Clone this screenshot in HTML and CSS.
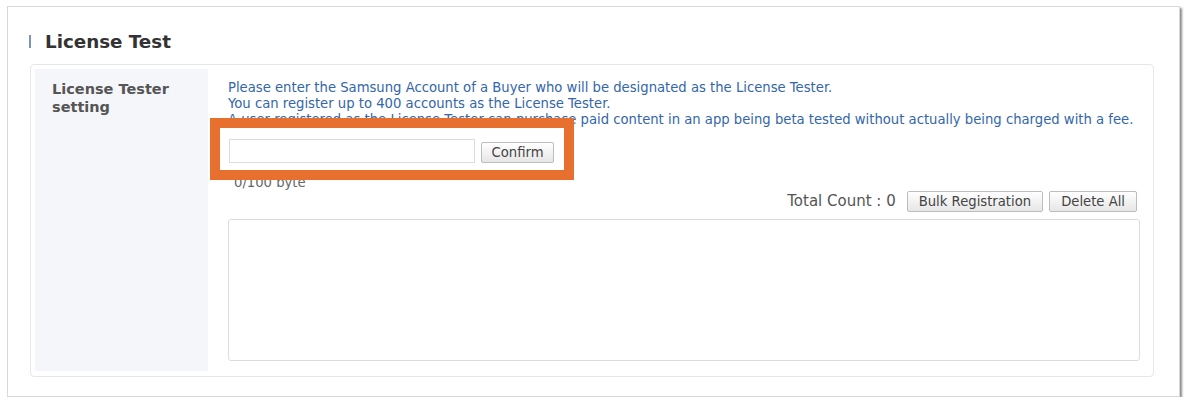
FILE: index.html
```html
<!DOCTYPE html>
<html>
<head>
<meta charset="utf-8">
<link rel="stylesheet" href="styles.css">
</head>
<body>
<div class="frame">
  <h2 class="title"><span class="title-bar"></span>License Test</h2>
  <div class="panel">
    <div class="label-col">License Tester<br>setting</div>
    <div class="content-col">
      <div class="help">
        <p>Please enter the Samsung Account of a Buyer who will be designated as the License Tester.</p>
        <p>You can register up to 400 accounts as the License Tester.</p>
        <p>A user registered as the License Tester can purchase paid content in an app being beta tested without actually being charged with a fee.</p>
      </div>
      <div class="entry">
        <input class="account-input" type="text">
        <button class="btn confirm">Confirm</button>
        <div class="highlight"></div>
      </div>
      <div class="bytes">0/100 byte</div>
      <div class="toolbar">
        <span class="count">Total Count : 0</span>
        <button class="btn">Bulk Registration</button>
        <button class="btn">Delete All</button>
      </div>
      <div class="list-box"></div>
    </div>
  </div>
</div>
</body>
</html>
```

FILE: styles.css
```css
html, body {
  margin: 0;
  padding: 0;
  background: #ffffff;
}
body {
  font-family: "DejaVu Sans", Verdana, sans-serif;
  font-size: 13.2px;
  color: #555;
}
.frame {
  box-sizing: border-box;
  margin: 6px 0 0 7px;
  width: 1173px;
  height: 391px;
  border: 1px solid #d8d8d8;
  box-shadow: 2px 2px 2px rgba(0, 0, 0, 0.45);
  padding: 23px 25px 20px 22px;
  background: #fff;
}
.title {
  display: flex;
  align-items: center;
  margin: 0 0 12px 0;
  height: 22px;
  font-size: 18.3px;
  font-weight: bold;
  color: #333;
}
.title-bar {
  display: inline-block;
  width: 2px;
  height: 13px;
  background: #7f93b3;
  margin: 0 14px 0 -1px;
}
.panel {
  box-sizing: border-box;
  height: 313px;
  border: 1px solid #e6e6e6;
  border-radius: 4px;
  padding: 4px 4px 5px 4px;
  display: flex;
}
.label-col {
  width: 173px;
  flex: none;
  background: #f5f6fa;
  padding: 11px 0 0 17px;
  box-sizing: border-box;
  font-size: 14.5px;
  font-weight: bold;
  line-height: 18px;
  color: #555;
}
.content-col {
  flex: 1;
  padding: 11px 9px 0 20px;
  display: flex;
  flex-direction: column;
}
.help p {
  margin: 0;
  line-height: 16px;
  color: #3366aa;
  white-space: nowrap;
}
.entry {
  position: relative;
  display: flex;
  align-items: flex-end;
  gap: 6px;
  margin-top: 11px;
  height: 24px;
}
.account-input {
  box-sizing: border-box;
  width: 246px;
  height: 24px;
  margin: 0 0 0 1px;
  border: 1px solid #dcdcdc;
  padding: 0 4px;
  background: #fff;
}
.btn {
  box-sizing: border-box;
  height: 21px;
  padding: 0 11px;
  font-family: "DejaVu Sans", Verdana, sans-serif;
  font-size: 13.2px;
  color: #444;
  border: 1px solid #bdbdbd;
  border-radius: 2px;
  background: linear-gradient(#ffffff, #e6e6e6);
}
.confirm {
  width: 73px;
  padding: 0;
}
.highlight {
  position: absolute;
  left: -18px;
  top: -21px;
  width: 344px;
  height: 42px;
  border: 10px solid #e8702f;
}
.bytes {
  margin: 12px 0 0 6px;
  height: 16px;
  line-height: 16px;
  color: #666;
}
.toolbar {
  display: flex;
  justify-content: flex-end;
  align-items: center;
  gap: 6px;
  margin-top: -1px;
  padding-right: 3px;
  height: 22px;
}
.count {
  font-size: 15px;
  color: #555;
  margin-right: 5px;
}
.list-box {
  margin-top: 7px;
  height: 140px;
  border: 1px solid #dcdcdc;
  border-radius: 3px;
}
```
